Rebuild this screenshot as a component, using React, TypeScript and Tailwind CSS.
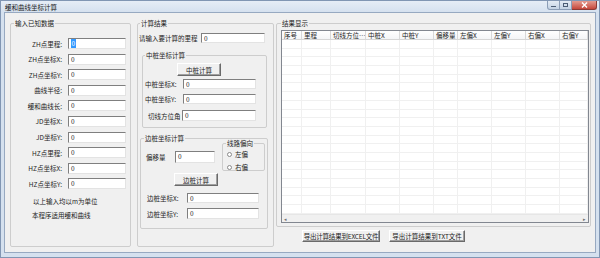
import React from "react";

const inputBase =
  "bg-white border border-t-[#7f7f7f] border-l-[#7f7f7f] border-r-[#e3e3e3] border-b-[#e3e3e3] pl-[2px] leading-[9px] overflow-hidden";

const btnBase =
  "bg-[#f0f0f0] border border-t-white border-l-white border-r-[#6a6a6a] border-b-[#6a6a6a] shadow-[inset_-1px_-1px_0_#a0a0a0] flex items-center justify-center whitespace-nowrap";

function Box({ className, selected }: { className: string; selected?: boolean }) {
  return (
    <div className={`${inputBase} ${className}`}>
      {selected ? <span className="bg-[#3399ff] text-white px-[0.5px]">0</span> : <span>0</span>}
    </div>
  );
}

function Radio({ label }: { label: string }) {
  return (
    <div className="flex items-center h-[8px]">
      <span className="w-[5px] h-[5px] rounded-full border border-[#8a8a8a] bg-white ml-[4px]" />
      <span className="ml-[3px]">{label}</span>
    </div>
  );
}

const leftRows = [
  "ZH点里程:",
  "ZH点坐标X:",
  "ZH点坐标Y:",
  "曲线半径:",
  "缓和曲线长:",
  "JD坐标X:",
  "JD坐标Y:",
  "HZ点里程:",
  "HZ点坐标X:",
  "HZ点坐标Y:",
];

const columns = [
  { name: "序号", w: "w-[20px]" },
  { name: "里程", w: "w-[29px]" },
  { name: "切线方位…", w: "w-[35px]" },
  { name: "中桩X", w: "w-[34px]" },
  { name: "中桩Y", w: "w-[34px]" },
  { name: "偏移量", w: "w-[24px]" },
  { name: "左偏X", w: "w-[34px]" },
  { name: "左偏Y", w: "w-[34px]" },
  { name: "右偏X", w: "w-[34px]" },
  { name: "右偏Y", w: "w-[28px]" },
];

const rows = Array.from({ length: 20 }, (_, i) => i);

export default function App() {
  return (
    <div className="w-[600px] h-[258px] bg-[#d5e1ef] border border-[#8196b3] flex flex-col overflow-hidden font-['Noto_Sans_CJK_SC','Liberation_Sans',sans-serif] text-[6.5px] leading-[8px] text-[#222]">
      {/* Title bar */}
      <div className="h-[11px] flex items-start bg-gradient-to-b from-[#e6edf6] to-[#d5e1ef]">
        <span className="ml-[4px] mt-[2px] text-[#1a1a1a]">缓和曲线坐标计算</span>
        <div className="ml-auto mr-[2px] flex">
          <div className="w-[13px] h-[9px] border border-t-0 border-[#8b9db6] rounded-bl-[3px] bg-gradient-to-b from-[#e4ebf4] to-[#c3d2e4] flex items-end justify-center pb-[2px]">
            <span className="w-[5px] h-[1.5px] bg-[#4c5d75]" />
          </div>
          <div className="w-[12px] h-[9px] border border-t-0 border-l-0 border-[#8b9db6] bg-gradient-to-b from-[#e4ebf4] to-[#c3d2e4] flex items-center justify-center">
            <span className="w-[5px] h-[4px] border border-[#4c5d75] border-t-[1.5px]" />
          </div>
          <div className="w-[25px] h-[9px] border border-t-0 border-l-0 border-[#8b3b35] rounded-br-[3px] bg-gradient-to-b from-[#e39b90] to-[#c5463b] flex items-center justify-center">
            <svg width="7" height="6" viewBox="0 0 7 6">
              <path d="M1 0.5 L6 5.5 M6 0.5 L1 5.5" stroke="white" strokeWidth="1.4" />
            </svg>
          </div>
        </div>
      </div>

      {/* Client area */}
      <div className="flex-1 mx-[3px] mb-[4px] bg-[#f0f0f0] border border-[#97a9c1] flex items-start pl-[5px] pt-[6px]">
        {/* Left: input data */}
        <fieldset className="w-[121px] h-[228px] border border-[#cdcdcd] rounded-[2px]">
          <legend className="ml-[3px] px-[1px] leading-[8px]">输入已知数据</legend>
          <div className="mt-[11px] flex flex-col gap-[4.6px]">
            {leftRows.map((label, i) => (
              <div key={label} className="flex items-center">
                <span className="w-[51px] text-right">{label}</span>
                <Box className="ml-[6px] w-[58px] h-[11px]" selected={i === 0} />
              </div>
            ))}
          </div>
          <div className="mt-[8px] ml-[22px]">以上输入均以m为单位</div>
          <div className="mt-[6px] ml-[21px]">本程序适用缓和曲线</div>
        </fieldset>

        {/* Center: results */}
        <fieldset className="ml-[6px] w-[137px] h-[228px] border border-[#cdcdcd] rounded-[2px]">
          <legend className="ml-[2px] px-[1px] leading-[8px]">计算结果</legend>
          <div className="mt-[6px] flex items-center">
            <span className="ml-[1px] w-[62px]">请输入要计算的里程</span>
            <Box className="w-[64px] h-[10px]" />
          </div>

          <fieldset className="mt-[8px] ml-[4px] w-[125px] h-[77px] border border-[#cdcdcd] rounded-[2px]">
            <legend className="ml-[2px] px-[1px] leading-[8px]">中桩坐标计算</legend>
            <div className={`${btnBase} mt-[4px] ml-[34px] w-[44px] h-[13px]`}>中桩计算</div>
            <div className="mt-[3px] flex items-center">
              <span className="ml-[2px] w-[38px]">中桩坐标X:</span>
              <Box className="w-[73px] h-[10px]" />
            </div>
            <div className="mt-[5px] flex items-center">
              <span className="ml-[2px] w-[38px]">中桩坐标Y:</span>
              <Box className="w-[73px] h-[10px]" />
            </div>
            <div className="mt-[6px] flex items-center">
              <span className="ml-[2px] w-[37px] pl-[3px]">切线方位角</span>
              <Box className="w-[74px] h-[11px]" />
            </div>
          </fieldset>

          <fieldset className="mt-[6px] ml-[2px] w-[128px] h-[95px] border border-[#cdcdcd] rounded-[2px]">
            <legend className="ml-[3px] px-[1px] leading-[8px]">边桩坐标计算</legend>
            <div className="flex items-start">
              <div className="mt-[9px] flex items-center">
                <span className="ml-[5px] w-[29px]">偏移量</span>
                <Box className="w-[40px] h-[12px]" />
              </div>
              <fieldset className="-mt-[3px] ml-[7px] w-[43px] h-[32px] border border-[#cdcdcd] rounded-[2px]">
                <legend className="ml-[3px] px-[1px] leading-[8px]">线路偏向</legend>
                <div className="mt-[3px]">
                  <Radio label="左偏" />
                </div>
                <div className="mt-[5px]">
                  <Radio label="右偏" />
                </div>
              </fieldset>
            </div>
            <div className={`${btnBase} mt-[2px] ml-[33px] w-[44px] h-[13px]`}>边桩计算</div>
            <div className="mt-[7px] flex items-center">
              <span className="ml-[6px] w-[40px]">边桩坐标X:</span>
              <Box className="w-[72px] h-[10px]" />
            </div>
            <div className="mt-[5px] flex items-center">
              <span className="ml-[6px] w-[40px]">边桩坐标Y:</span>
              <Box className="w-[72px] h-[11px]" />
            </div>
          </fieldset>
        </fieldset>

        {/* Right: result list */}
        <div className="ml-[2px] flex flex-col">
          <fieldset className="w-[315px] h-[208px] border border-[#cdcdcd] rounded-[2px]">
            <legend className="ml-[4px] px-[1px] leading-[8px]">结果显示</legend>
            <div className="mt-[3px] ml-[4px] w-[308px] h-[193px] border border-[#828790] bg-white flex flex-col">
              <div className="h-[9px] flex border-b border-[#d5d5d5] bg-gradient-to-b from-white to-[#f4f5f7]">
                {columns.map((c) => (
                  <div key={c.name} className={`${c.w} shrink-0 border-r border-[#d8d8d8] pl-[2px] leading-[8px] whitespace-nowrap overflow-hidden`}>
                    {c.name}
                  </div>
                ))}
              </div>
              <div className="flex-1 flex flex-col">
                {rows.map((r) => (
                  <div key={r} className="h-[8.7px] flex border-b border-[#f0f0f0]">
                    {columns.map((c) => (
                      <div key={c.name} className={`${c.w} shrink-0 border-r border-[#f0f0f0]`} />
                    ))}
                  </div>
                ))}
              </div>
              <div className="h-[8px] bg-[#f0f0f0] border-t border-[#e6e6e6] flex items-center justify-between px-[2px] text-[5px] leading-[5px] text-[#707070]">
                <span>◂</span>
                <span>▸</span>
              </div>
            </div>
          </fieldset>
          <div className="mt-[3px] flex">
            <div className={`${btnBase} ml-[26px] w-[78px] h-[12px] tracking-[-0.2px]`}>导出计算结果到EXCEL文件</div>
            <div className={`${btnBase} ml-[9px] w-[76px] h-[12px]`}>导出计算结果到TXT文件</div>
          </div>
        </div>
      </div>
    </div>
  );
}
